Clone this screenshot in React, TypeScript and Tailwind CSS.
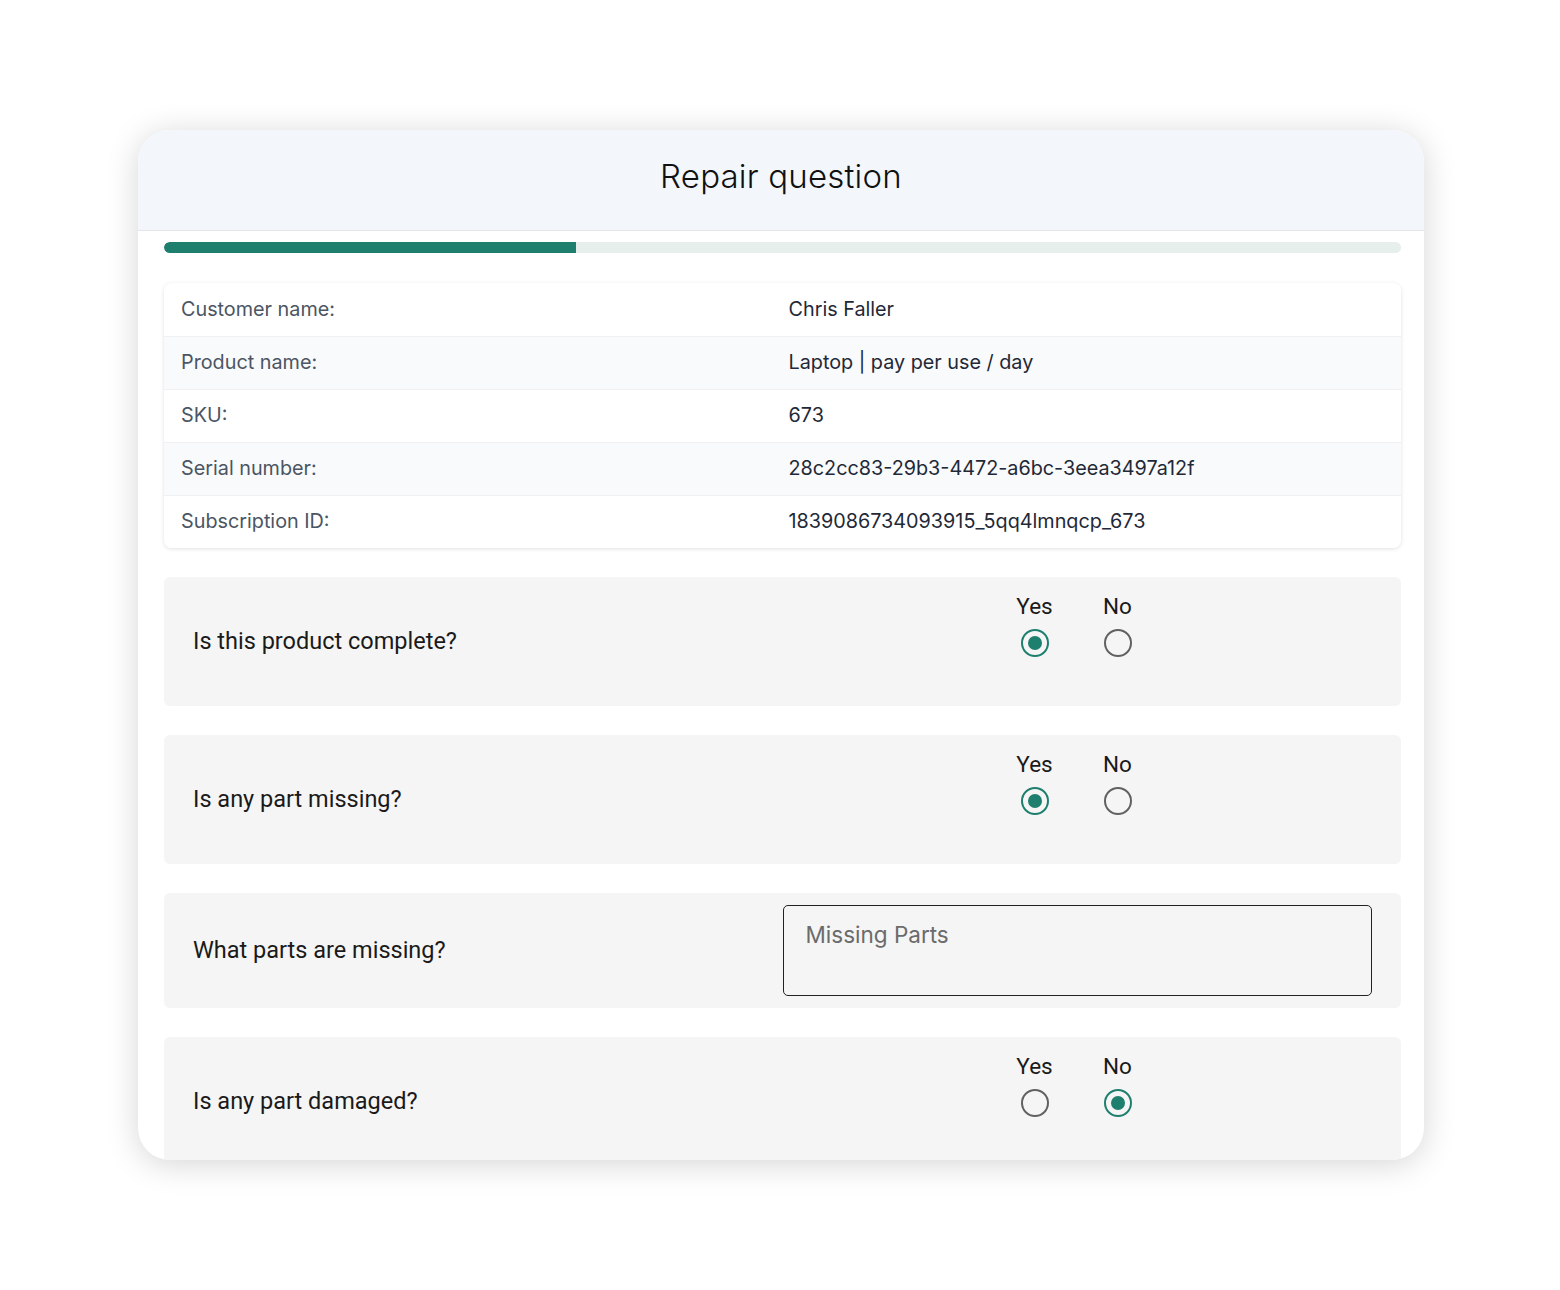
import React from "react";

const info: [string, string][] = [
  ["Customer name:", "Chris Faller"],
  ["Product name:", "Laptop | pay per use / day"],
  ["SKU:", "673"],
  ["Serial number:", "28c2cc83-29b3-4472-a6bc-3eea3497a12f"],
  ["Subscription ID:", "1839086734093915_5qq4lmnqcp_673"],
];

function Radio({ checked }: { checked: boolean }) {
  return checked ? (
    <span className="flex h-[28px] w-[28px] items-center justify-center rounded-full border-[2.5px] border-[#1e7f6e]">
      <span className="h-[14px] w-[14px] rounded-full bg-[#1e7f6e]" />
    </span>
  ) : (
    <span className="h-[28px] w-[28px] rounded-full border-[2.5px] border-[#616161]" />
  );
}

function YesNo({ yes }: { yes: boolean }) {
  return (
    <div className="flex gap-[27px] pl-[224px] pt-[16px]">
      {[
        ["Yes", yes],
        ["No", !yes],
      ].map(([l, c]) => (
        <div key={l as string} className="flex w-[56px] flex-col items-center gap-[10px]">
          <span className="text-[22.5px] leading-[26px] text-[#1a1a1a]">{l as string}</span>
          <Radio checked={c as boolean} />
        </div>
      ))}
    </div>
  );
}

function Question({ q, yes }: { q: string; yes: boolean }) {
  return (
    <div className="grid h-[129px] shrink-0 grid-cols-2 rounded-[6px] bg-[#f5f5f5]">
      <div className="flex items-center pl-[29px] text-[23.5px] text-[#1a1a1a]">{q}</div>
      <div>
        <YesNo yes={yes} />
      </div>
    </div>
  );
}

export default function App() {
  return (
    <div className="flex min-h-[1290px] w-full bg-white pl-[138px] pt-[130px]" style={{ fontFamily: "Roboto, sans-serif" }}>
      <div className="flex h-[1030px] w-[1286px] flex-col overflow-hidden rounded-[32px] bg-white shadow-[0_4px_32px_rgba(0,0,0,0.17)]">
        <div className="flex h-[101px] shrink-0 items-center justify-center border-b-[1.5px] border-[#e3e6ea] bg-[#f3f7fc]">
          <h1 className="-mt-[6px] text-[33px] font-light tracking-[0.2px] text-[#111]" style={{ fontFamily: "Inter, sans-serif" }}>
            Repair question
          </h1>
        </div>
        <div className="flex flex-col pl-[26px] pr-[23px]">
          <div className="mt-[11px] h-[11px] w-full overflow-hidden rounded-full bg-[#e6efec]">
            <div className="h-full w-[412px] rounded-l-full bg-[#1e7f6e]" />
          </div>
          <div
            className="mt-[30px] overflow-hidden rounded-[8px] bg-white shadow-[0_1px_4px_rgba(0,0,0,0.12)]"
            style={{ fontFamily: "Inter, sans-serif" }}
          >
            {info.map(([k, v], i) => (
              <div
                key={k}
                className={`grid h-[53px] grid-cols-2 items-center border-[#eef0f2] text-[19.8px] ${i > 0 ? "border-t" : ""} ${i % 2 === 1 ? "bg-[#f9fafb]" : "bg-white"}`}
              >
                <div className="pl-[17px] text-[#4b5563]">{k}</div>
                <div className="pl-[6px] text-[#1f2937]">{v}</div>
              </div>
            ))}
          </div>
          <div className="mt-[29px] flex flex-col gap-[29px]">
            <Question q="Is this product complete?" yes={true} />
            <Question q="Is any part missing?" yes={true} />
            <div className="grid h-[115px] shrink-0 grid-cols-2 items-center rounded-[6px] bg-[#f5f5f5]">
              <div className="pl-[29px] text-[23.5px] text-[#1a1a1a]">What parts are missing?</div>
              <div className="pr-[29px]">
                <textarea
                  placeholder="Missing Parts"
                  className="block h-[91px] w-full resize-none rounded-[5px] border-[1.5px] border-[#222] bg-[#f5f5f5] px-[22px] py-[12px] text-[22.5px] text-[#1a1a1a] outline-none placeholder:text-[#6b6b6b]"
                  style={{ fontFamily: "Inter, sans-serif" }}
                />
              </div>
            </div>
            <Question q="Is any part damaged?" yes={false} />
          </div>
        </div>
      </div>
    </div>
  );
}
